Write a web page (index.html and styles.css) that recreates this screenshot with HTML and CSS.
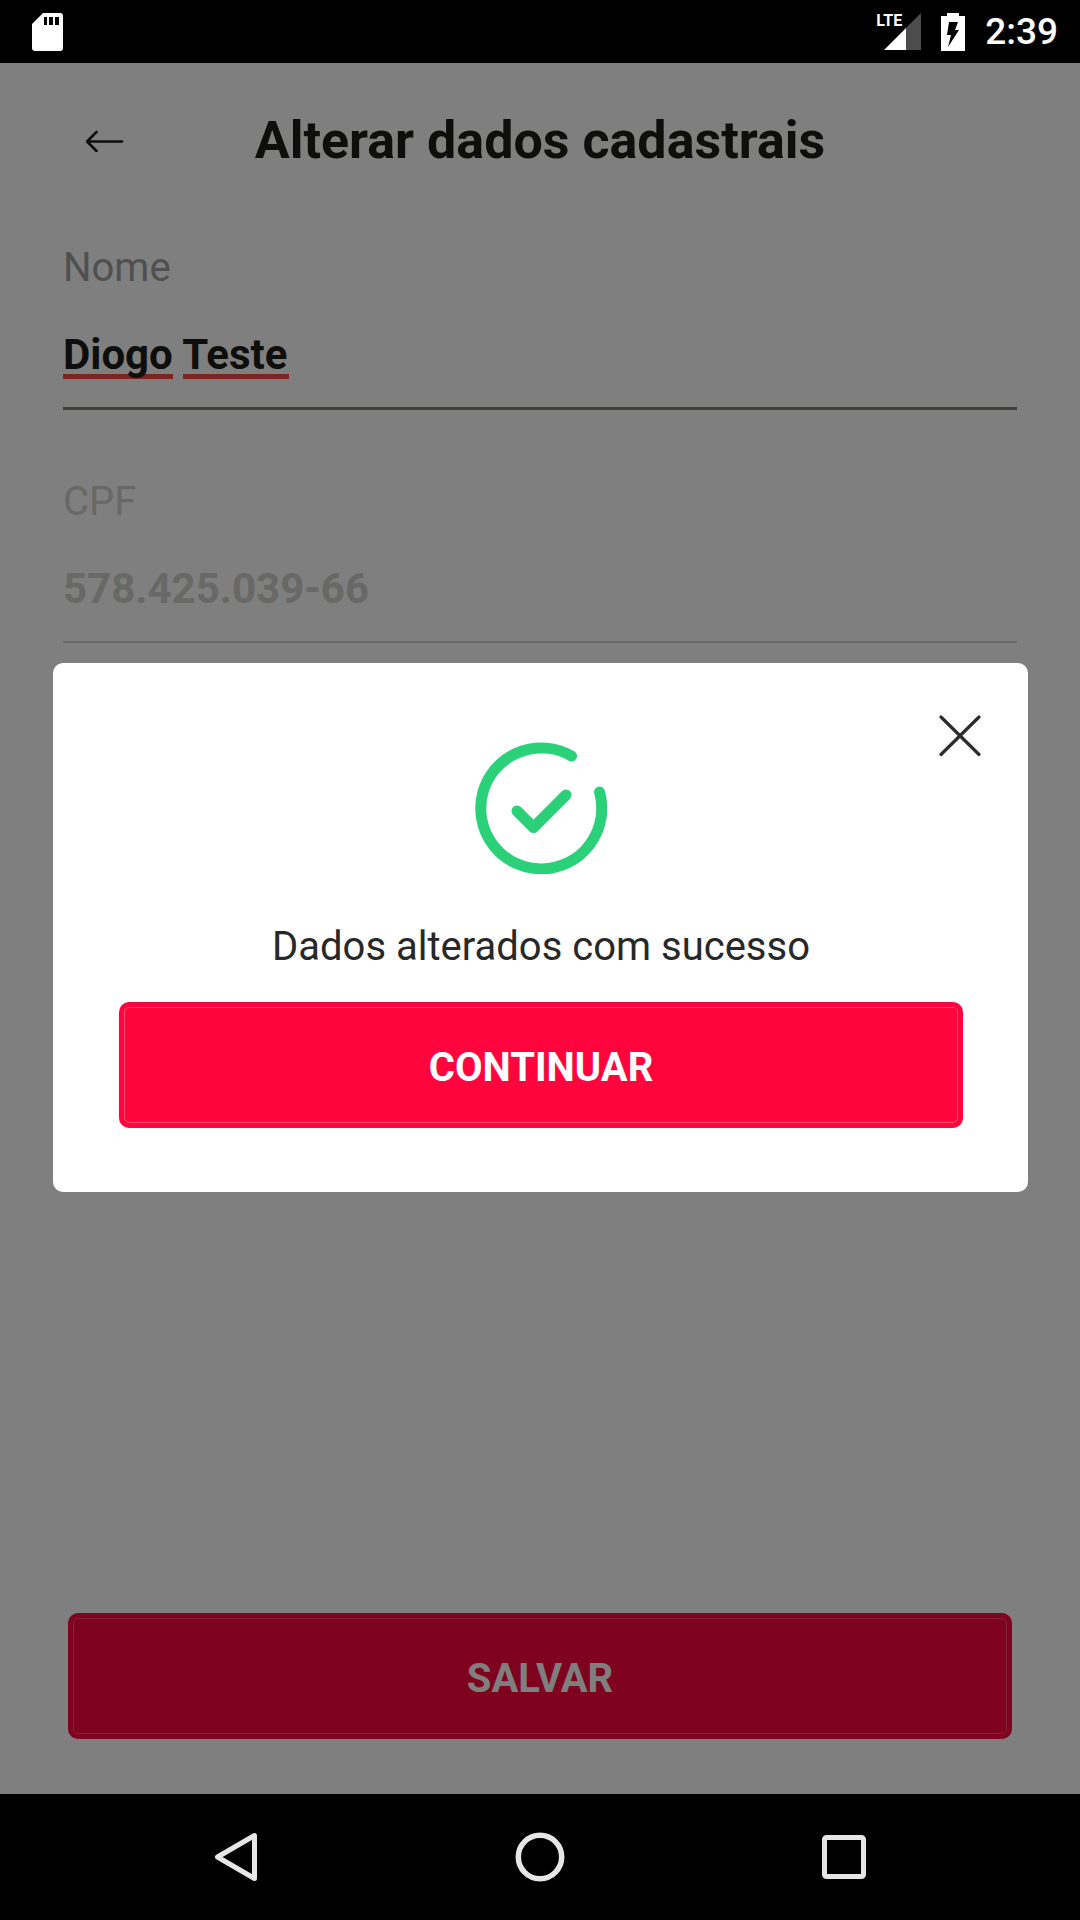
FILE: index.html
```html
<!DOCTYPE html>
<html lang="pt-BR">
<head>
<meta charset="utf-8">
<meta name="viewport" content="width=device-width, initial-scale=1">
<title>Alterar dados cadastrais</title>
<link rel="stylesheet" href="styles.css">
</head>
<body>
<div class="status-bar">
  <svg class="icon-sd" viewBox="0 0 31 38" width="31" height="38" aria-hidden="true">
    <path fill="#fff" fill-rule="evenodd" d="M11 0H28a3 3 0 0 1 3 3V35a3 3 0 0 1-3 3H3a3 3 0 0 1-3-3V11ZM12 4v8h3V4ZM17 4v8h4V4ZM23 4v8h4V4Z"/>
  </svg>
  <div class="status-right">
    <div class="signal">
      <span class="signal-label">LTE</span>
      <svg viewBox="0 0 37 37" width="37" height="37" aria-hidden="true">
        <path fill="#4d4d4d" d="M37 0V37H22V15Z"/>
        <path fill="#fff" d="M22 15V37H0Z"/>
      </svg>
    </div>
    <svg viewBox="0 0 24 38" width="24" height="38" aria-hidden="true">
      <path fill="#fff" d="M6 0H18V3H24V38H0V3H6Z"/>
      <path fill="#000" d="M8 9H17L14 17H18L7 34L10 22H6Z"/>
    </svg>
    <time class="clock">2:39</time>
  </div>
</div>

<div class="stage">
  <main class="screen">
    <header class="screen-header">
      <button class="back" type="button" aria-label="Voltar">
        <svg viewBox="0 0 38 22" width="38" height="22" fill="none" stroke="#1c1c19" stroke-width="2.6" stroke-linecap="round" stroke-linejoin="round" aria-hidden="true">
          <path d="M36 11.500H1.500M10.500 2L1 11.500L10.500 21"/>
        </svg>
      </button>
      <h1 class="title">Alterar dados cadastrais</h1>
    </header>
    <form class="form">
      <div class="field">
        <label class="field-label" for="nome">Nome</label>
        <input class="field-input field-input-spelling" id="nome" type="text" value="Diogo Teste" spellcheck="false">
      </div>
      <div class="field field-disabled">
        <label class="field-label" for="cpf">CPF</label>
        <input class="field-input" id="cpf" type="text" value="578.425.039-66" readonly>
      </div>
      <button class="button save" type="button">SALVAR</button>
    </form>
  </main>

  <div class="overlay">
    <section class="modal" role="dialog" aria-modal="true" aria-labelledby="message">
      <button class="close" type="button" aria-label="Fechar">
        <svg viewBox="0 0 42 42" width="42" height="42" fill="none" stroke="#2b2c2e" stroke-width="3.2" stroke-linecap="round" aria-hidden="true">
          <path d="M2 2L40 39.500M40 2L2 39.500"/>
        </svg>
      </button>
      <svg viewBox="0 0 132 132" width="132" height="132" fill="none" stroke="#2bd179" stroke-width="11" stroke-linecap="round" stroke-linejoin="round" aria-hidden="true">
        <path d="M96.500 14A60.500 60.500 0 1 0 124.500 50"/>
        <path d="M42 69L58.500 85.500L91 53"/>
      </svg>
      <p class="message" id="message">Dados alterados com sucesso</p>
      <button class="button continue" type="button">CONTINUAR</button>
    </section>
  </div>
</div>

<nav class="nav-bar">
  <button class="nav-button" type="button" aria-label="Voltar">
    <svg viewBox="0 0 50 50" width="50" height="50" fill="none" stroke="#e6e6e6" stroke-width="5" stroke-linejoin="round" aria-hidden="true"><path d="M6.500 25L43.500 3.500V46.500Z"/></svg>
  </button>
  <button class="nav-button" type="button" aria-label="Início">
    <svg viewBox="0 0 50 50" width="50" height="50" fill="none" stroke="#e6e6e6" stroke-width="5.500" aria-hidden="true"><circle cx="25" cy="25" r="21.700"/></svg>
  </button>
  <button class="nav-button" type="button" aria-label="Recentes">
    <svg viewBox="0 0 50 50" width="50" height="50" fill="none" stroke="#e6e6e6" stroke-width="5" aria-hidden="true"><rect x="5.500" y="5.500" width="39" height="39" rx="2"/></svg>
  </button>
</nav>
</body>
</html>
```
FILE: styles.css
```css
* {
  box-sizing: border-box;
}

body {
  margin: 0;
  min-height: 100vh;
  display: flex;
  flex-direction: column;
  background: #000;
  font-family: Roboto, "Liberation Sans", sans-serif;
}

button {
  padding: 0;
  border: 0;
  background: none;
  font-family: inherit;
}

svg {
  display: block;
}

/* System status bar */
.status-bar {
  display: flex;
  align-items: center;
  justify-content: space-between;
  height: 63px;
  padding: 0 22px 0 32px;
  color: #fff;
}

.status-right {
  display: flex;
  align-items: center;
  gap: 20px;
}

.signal {
  position: relative;
}

.signal-label {
  position: absolute;
  top: 0;
  right: 19px;
  font-size: 16px;
  line-height: 16px;
  font-weight: 700;
}

.clock {
  font-size: 37px;
  font-weight: 500;
  line-height: 44px;
}

/* Form screen */
.stage {
  position: relative;
  flex: 1;
  display: flex;
  flex-direction: column;
}

.screen {
  flex: 1;
  display: flex;
  flex-direction: column;
  padding: 46px 63px 55px;
  background: #fff;
}

.screen-header {
  display: grid;
  grid-template-columns: 84px 1fr 84px;
  align-items: center;
  margin-bottom: 71px;
}

.back {
  display: flex;
  justify-content: center;
  align-items: center;
  height: 64px;
}

.title {
  margin: 0;
  font-size: 52px;
  line-height: 64px;
  font-weight: 700;
  text-align: center;
  white-space: nowrap;
  color: #1c1c19;
}

.form {
  flex: 1;
  display: flex;
  flex-direction: column;
}

.field {
  display: flex;
  flex-direction: column;
  margin-bottom: 68px;
}

.field-label {
  font-size: 40px;
  line-height: 48px;
  color: #a0a0a0;
}

.field-input {
  width: 100%;
  height: 118px;
  padding: 10px 0 0;
  border: 0;
  border-bottom: 3px solid #808075;
  border-radius: 0;
  background: transparent;
  font: 700 42px/50px Roboto, "Liberation Sans", sans-serif;
  color: #1c1c19;
}

/* Spelling marks under the two words */
.field-input-spelling {
  background-image: linear-gradient(#ff4444, #ff4444), linear-gradient(#ff4444, #ff4444);
  background-repeat: no-repeat;
  background-size: 110px 5px, 106px 5px;
  background-position: 0 82px, 120px 82px;
}

.field-disabled .field-label,
.field-disabled .field-input {
  color: #d0d0cc;
}

.field-disabled .field-input {
  height: 117px;
  border-bottom: 2px solid #d0d0cc;
}

.button {
  height: 126px;
  padding-top: 6px;
  border-radius: 10px;
  background: #ff043d;
  outline: 1px solid #ff4a72;
  outline-offset: -6px;
  font-size: 40px;
  line-height: 48px;
  font-weight: 700;
  color: #fff;
}

.save {
  margin: auto 5px 0;
}

/* Success dialog */
.overlay {
  position: absolute;
  inset: 0;
  display: flex;
  align-items: center;
  padding: 0 52px 2px 53px;
  background: rgba(0, 0, 0, 0.5);
}

.modal {
  position: relative;
  flex: 1;
  display: flex;
  flex-direction: column;
  align-items: center;
  padding: 79px 65px 64px 66px;
  border-radius: 10px;
  background: #fff;
}

.close {
  position: absolute;
  top: 52px;
  right: 47px;
}

.message {
  margin: 49px 0 31px;
  font-size: 40px;
  line-height: 48px;
  color: #282828;
}

.continue {
  align-self: stretch;
}

/* System navigation */
.nav-bar {
  display: grid;
  grid-template-columns: repeat(3, 1fr);
  height: 126px;
  padding: 0 84px;
}

.nav-button {
  display: flex;
  justify-content: center;
  align-items: center;
}
```
